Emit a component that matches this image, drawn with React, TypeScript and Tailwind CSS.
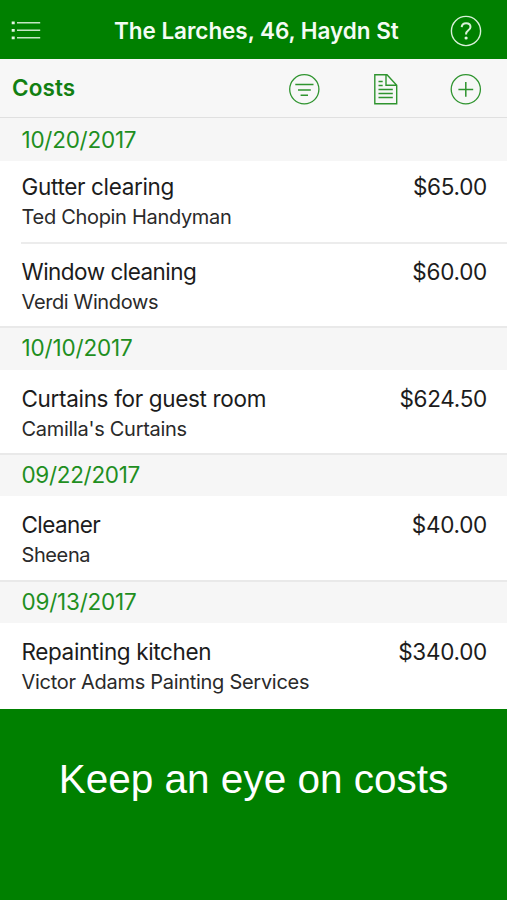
type Entry = { title: string; vendor: string; amount: string; row: string; titleGap: string; vendorGap: string };
type Section = { date: string; band: string; dateGap: string; entries: Entry[] };

const sections: Section[] = [
  {
    date: "10/20/2017",
    band: "h-[43px]",
    dateGap: "tracking-[-0.25px]",
    entries: [
      { title: "Gutter clearing", vendor: "Ted Chopin Handyman", amount: "$65.00", row: "h-[83px] pt-[12px] border-b-2 border-[#ececec]", titleGap: "tracking-[-0.34px]", vendorGap: "tracking-[-0.31px]" },
      { title: "Window cleaning", vendor: "Verdi Windows", amount: "$60.00", row: "h-[82px] pt-[14px]", titleGap: "tracking-[-0.52px]", vendorGap: "tracking-[-0.38px]" },
    ],
  },
  {
    date: "10/10/2017",
    band: "h-[44px] border-t-2 pb-[2px]",
    dateGap: "tracking-[-0.17px]",
    entries: [{ title: "Curtains for guest room", vendor: "Camilla's Curtains", amount: "$624.50", row: "h-[83px] pt-[15px]", titleGap: "tracking-[-0.33px]", vendorGap: "tracking-[-0.3px]" }],
  },
  {
    date: "09/22/2017",
    band: "h-[43px] border-t-2 pb-[2px]",
    dateGap: "tracking-[-0.32px]",
    entries: [{ title: "Cleaner", vendor: "Sheena", amount: "$40.00", row: "h-[84px] pt-[15px]", titleGap: "tracking-[-0.6px]", vendorGap: "tracking-[-0.4px]" }],
  },
  {
    date: "09/13/2017",
    band: "h-[43px] border-t-2 pb-[2px]",
    dateGap: "tracking-[-0.23px]",
    entries: [{ title: "Repainting kitchen", vendor: "Victor Adams Painting Services", amount: "$340.00", row: "h-[86px] pt-[15px]", titleGap: "tracking-[-0.38px]", vendorGap: "tracking-[-0.29px]" }],
  },
];

function ListIcon() {
  return (
    <svg className="mb-[2px] ml-[11px] h-5 w-[31px]" viewBox="0 0 31 20" fill="none" stroke="#c4e6c4" strokeWidth="1.6">
      <path d="M6 2.8H29.2M6 10.3H29.2M6 17.8H29.2" />
      <path d="M.7 2.8H3.7M.7 10.3H3.7M.7 17.8H3.7" stroke="#e4f4e4" strokeWidth="2.8" />
    </svg>
  );
}

function HelpIcon() {
  return (
    <svg className="h-8 w-8" viewBox="0 0 32 32" fill="none" stroke="#d8f0d8">
      <circle cx="16" cy="16" r="14.6" strokeWidth="1.4" />
      <path d="M11.7 12.2C11.9 9.6 13.7 8.3 16.1 8.3C18.6 8.3 20.5 9.8 20.5 12C20.5 15.2 16.1 15.3 16.1 18.8V19.5" strokeWidth="2" />
      <circle cx="16.1" cy="23" r="1.6" fill="#e4f4e4" stroke="none" />
    </svg>
  );
}

function FilterIcon() {
  return (
    <svg className="h-8 w-8" viewBox="0 0 32 32" fill="none" stroke="#2f942f" strokeWidth="1.3">
      <circle cx="16.3" cy="16.3" r="14.6" />
      <path d="M7.3 11.5H25.5M10 17H22.8M12.6 22.3H20" strokeWidth="1.5" />
    </svg>
  );
}

function DocumentIcon() {
  return (
    <svg className="ml-[2px] h-8 w-6" viewBox="0 0 24 32" fill="none" stroke="#2f942f" strokeWidth="1.4">
      <path d="M.8 1.7H13L22.7 12.3V30.7H.8ZM12 1.7V12.3H22.7" />
      <path d="M4.5 8.5H8.7M4.5 12.5H8.7M4.5 16.5H18.8M4.5 20.5H18.8M4.5 24.5H18.8" />
    </svg>
  );
}

function AddIcon() {
  return (
    <svg className="h-8 w-8" viewBox="0 0 32 32" fill="none" stroke="#2f942f" strokeWidth="1.3">
      <circle cx="15.8" cy="16.3" r="14.6" />
      <path d="M8.4 16.4H23.2M15.8 9V23.8" strokeWidth="1.5" />
    </svg>
  );
}

function CostRow({ entry }: { entry: Entry }) {
  return (
    <li className={`ml-[21px] flex justify-between pr-[20px] pl-[0.5px] text-[#1c1c1c] ${entry.row}`}>
      <div>
        <div className={`text-[22.5px] leading-[28px] whitespace-nowrap ${entry.titleGap}`}>{entry.title}</div>
        <div className={`mt-[3px] text-[20px] leading-[26px] whitespace-nowrap text-[#2a2a2a] ${entry.vendorGap}`}>{entry.vendor}</div>
      </div>
      <div className="text-[22.5px] leading-[28px] tracking-[-0.28px]">{entry.amount}</div>
    </li>
  );
}

export default function App() {
  return (
    <main className="flex h-[900px] w-[507px] flex-col overflow-hidden bg-white font-['Inter',sans-serif]">
      <header className="flex h-[59px] shrink-0 items-center bg-[#008000] pt-[3px]">
        <ListIcon />
        <h1 className="ml-[72px] w-[286px] text-[22.5px] leading-[28px] font-semibold tracking-[-0.05px] whitespace-nowrap text-[#f4fcf4]">The Larches, 46, Haydn St</h1>
        <div className="ml-[50px]"><HelpIcon /></div>
      </header>
      <div className="flex h-[59px] shrink-0 items-center border-b border-[#e0e0e0] bg-[#f7f7f7] pt-[1px]">
        <h2 className="mb-[1px] ml-[12px] w-[276px] text-[22.5px] leading-[28px] font-semibold tracking-[0.1px] text-[#128012]">Costs</h2>
        <div className="flex w-[194px] items-center justify-between">
          <FilterIcon />
          <DocumentIcon />
          <AddIcon />
        </div>
      </div>
      <div className="flex shrink-0 flex-col">
        {sections.map((s) => (
          <section key={s.date}>
            <h3 className={`flex items-center border-[#e9e9e9] bg-[#f6f6f6] pl-[21.5px] text-[22.5px] text-[#1f8f1f] ${s.band} ${s.dateGap}`}>{s.date}</h3>
            <ul>{s.entries.map((e) => <CostRow key={e.title} entry={e} />)}</ul>
          </section>
        ))}
      </div>
      <footer className="flex grow justify-center bg-[#008000] pt-[46px] font-['Liberation_Sans',Arial,sans-serif] text-[40.5px] leading-[48px] text-white">
        <p>Keep an eye on costs</p>
      </footer>
    </main>
  );
}
